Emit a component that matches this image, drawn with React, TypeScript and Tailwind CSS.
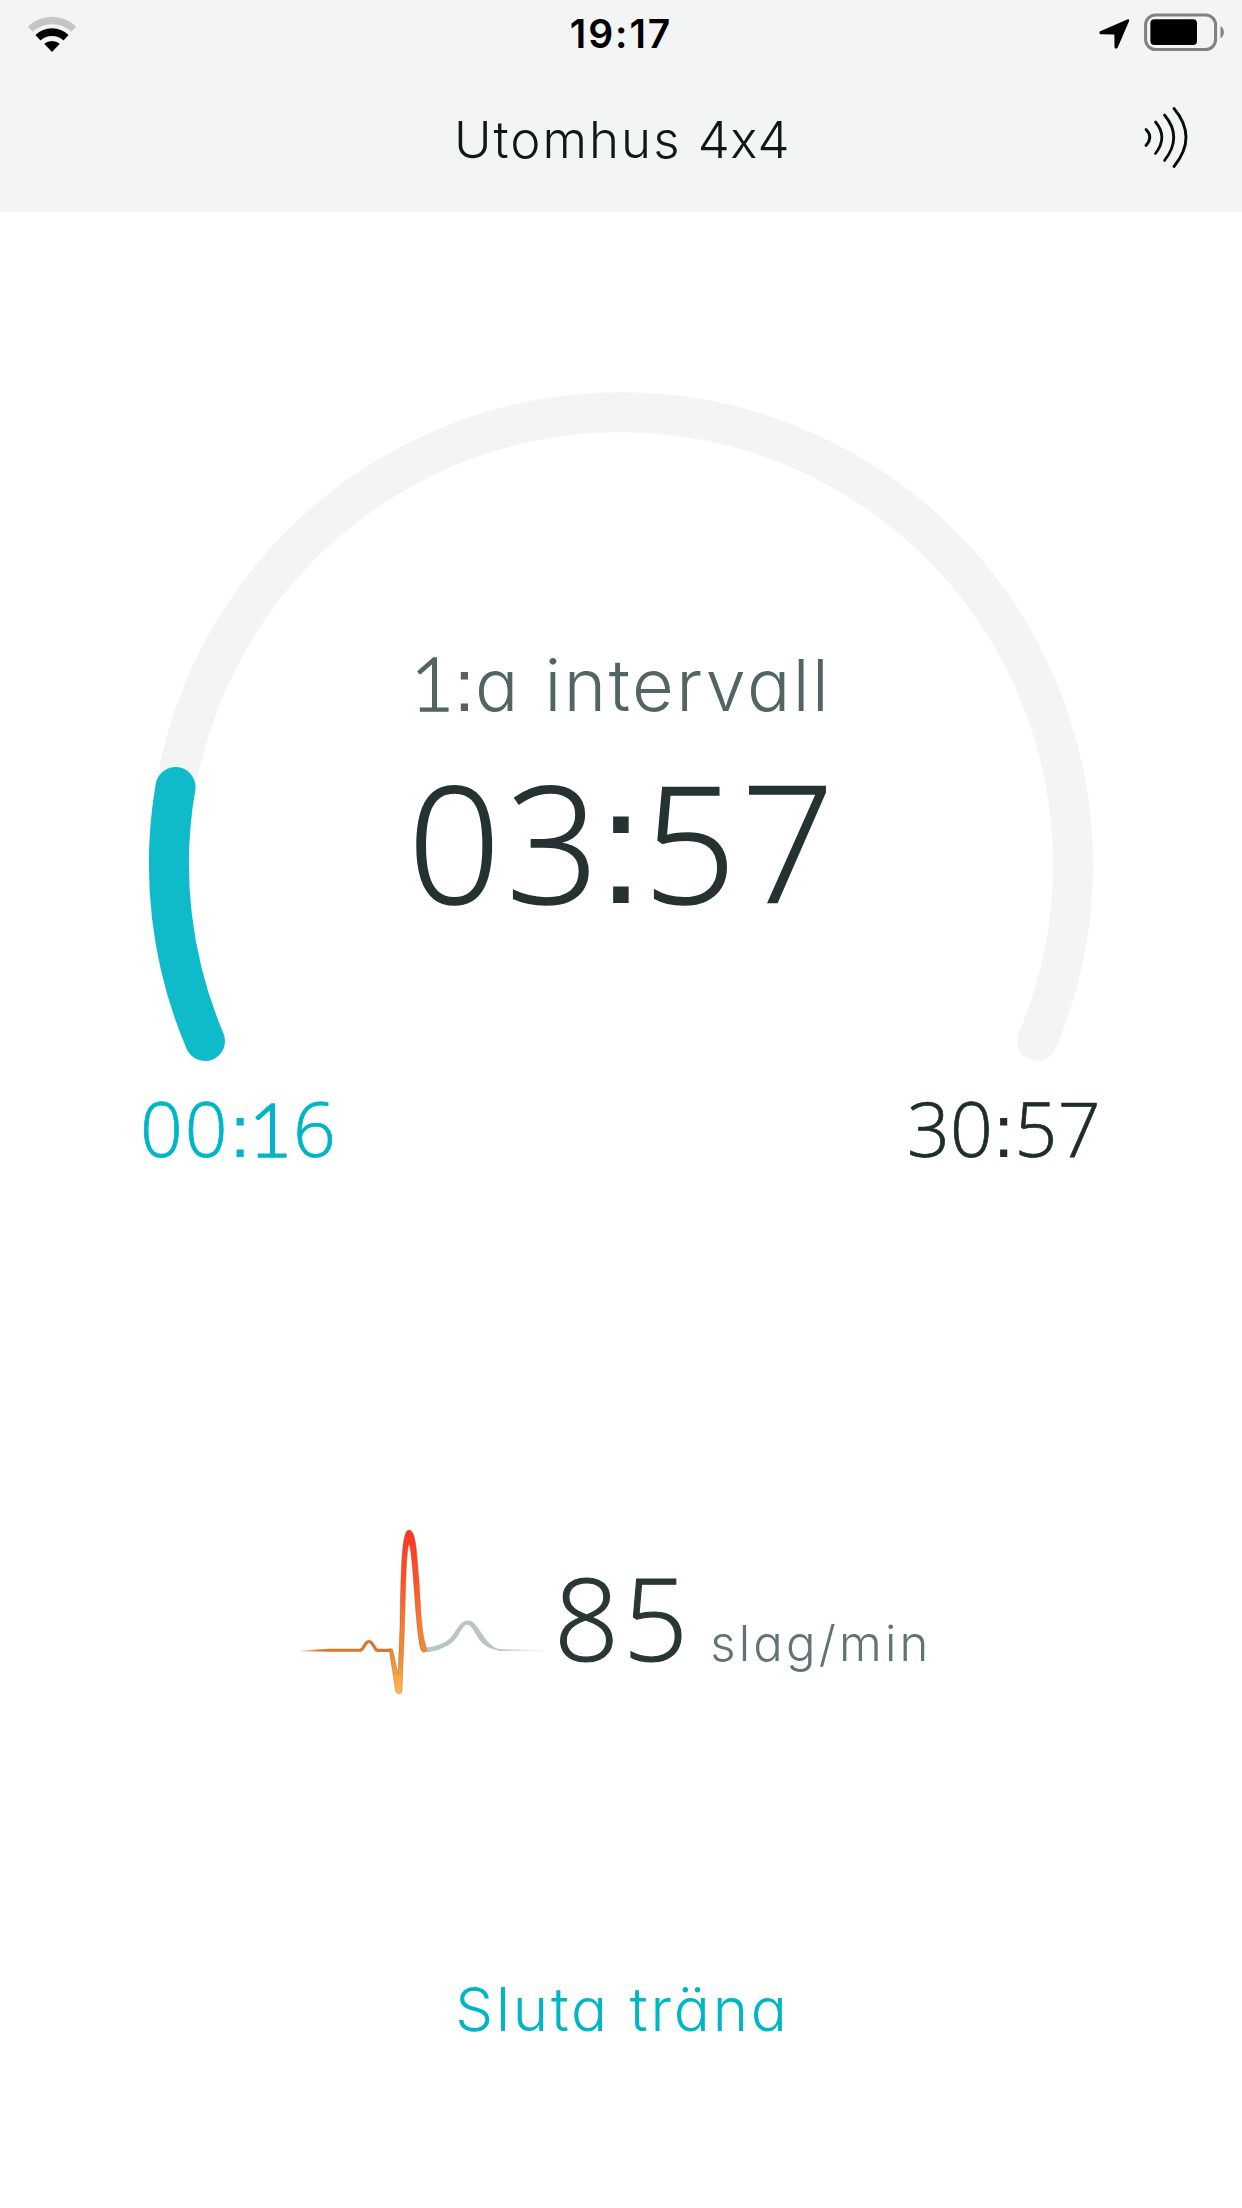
const letters = "font-['Inter',sans-serif] font-light [font-feature-settings:'cv11','calt'_0]";
const digits = "font-['Open_Sans',sans-serif] font-light [-webkit-text-stroke:0.01em_currentColor]";

function Colon({ className = '' }: { className?: string }) {
  return (
    <span className={`font-['Liberation_Sans',sans-serif] leading-[0] font-normal [-webkit-text-stroke:0px] ${className}`}>:</span>
  );
}

function One({ className = '' }: { className?: string }) {
  return (
    <span className={`font-['Lato',sans-serif] leading-[0] font-light [-webkit-text-stroke:1.4px_currentColor] ${className}`}>1</span>
  );
}

function StatusBar() {
  return (
    <div className="grid h-[68px] grid-cols-3 items-center">
      <svg width="52" height="38" viewBox="0 0 52 38" className="ml-[26px]">
        <path d="M1.8 11.5A35 35 0 0 1 50.2 11.5L45.4 16.8A29 29 0 0 0 6.6 16.8Z" fill="#c4c5c5" />
        <path d="M9.4 20A24 24 0 0 1 42.6 20L37.5 25.4A17.5 17.5 0 0 0 14.5 25.4Z" fill="#000" />
        <path d="M18.2 28.8A12 12 0 0 1 33.8 28.8L26 37Z" fill="#000" />
      </svg>
      <div className="text-center font-['Inter',sans-serif] text-[39px] leading-[68px] font-semibold tracking-[1.9px] text-black">19:17</div>
      <div className="mr-[18px] flex items-center justify-end">
        <svg width="32" height="32" viewBox="0 0 32 32" className="mr-[13px]">
          <path d="M29.3 1.4C30.7 .8 31.6 1.8 31 3.2L19.8 29.3C18.9 31.3 16.5 30.8 16.5 28.7L16.4 17.2Q16.4 16.4 15.6 16.4L3.3 16.2C1.2 16.2 .7 13.7 2.7 12.9Z" fill="#000" />
        </svg>
        <svg width="81" height="38" viewBox="0 0 81 38" className="-mt-[4px]">
          <rect x="2.6" y="1.9" width="70" height="34.6" rx="10" fill="none" stroke="#808282" strokeWidth="3" />
          <rect x="7.4" y="6.2" width="46.6" height="25.8" rx="4" fill="#000" />
          <path d="M77.500 13.200Q80.800 15 80.800 19.200T77.500 25.200Z" fill="#808282" />
        </svg>
      </div>
    </div>
  );
}

function Header() {
  return (
    <header className="h-[212px] bg-[#f3f5f4]">
      <StatusBar />
      <div className="grid h-[144px] grid-cols-[1fr_auto_1fr]">
        <div />
        <h1 className={`${letters} ml-[2px] text-[51px] leading-[144px] tracking-[2px] text-[#0e1818]`}>
          Utomhus <span className="tracking-[0.3px]">4x4</span>
        </h1>
        <svg width="46" height="62" viewBox="0 0 46 62" fill="none" stroke="#050d0d" strokeWidth="2.8" strokeLinecap="round" className="mt-[38px] mr-[53px] justify-self-end">
          <path d="M3 23.500Q10.600 31 3 39.500" />
          <path d="M12.500 16Q25.200 31 12.500 47.500" />
          <path d="M21.500 9Q40 31 21.500 54.500" />
          <path d="M31 2.500Q55 31 31 60.500" />
        </svg>
      </div>
    </header>
  );
}

function Gauge() {
  return (
    <section className="mx-auto mt-[178px] grid w-[948px]">
      <svg width="948" height="676" viewBox="147 390 948 676" fill="none" strokeWidth="40" strokeLinecap="round" className="col-start-1 row-start-1">
        <path d="M205 1041A452 452 0 1 1 1037 1041" stroke="#f3f5f4" />
        <path d="M205 1041A452 452 0 0 1 175.500 787" stroke="#0fbbcb" />
      </svg>
      <div className="col-start-1 row-start-1 flex flex-col items-center pt-[250px] whitespace-nowrap">
        <div className={`${letters} text-[72px] leading-[90px] tracking-[2.5px] text-[#536464] [word-spacing:1px]`}>
          <One className="text-[75px] tracking-[0px]" />
          <Colon className="text-[75px] tracking-[0px]" />a intervall
        </div>
        <div className={`${digits} mt-[10px] text-[163px] leading-[200px] text-[#263232]`}>
          <span className="tracking-[5.5px]">0</span>
          <span className="tracking-[-1px]">3</span>
          <Colon className="tracking-[-0.5px]" />
          <span className="tracking-[5px]">5</span>7
        </div>
      </div>
    </section>
  );
}

function Times() {
  return (
    <div className={`${digits} mt-[17px] flex justify-between pr-[141px] pl-[140px] text-[75px] leading-[90px]`}>
      <div className="tracking-[2px] text-[#00b5c6]">
        00<Colon /><One className="-ml-[4px] tracking-[1px]" />6
      </div>
      <div className="tracking-[0.4px] text-[#1f2c2c]">30<Colon />57</div>
    </div>
  );
}

function Pulse() {
  return (
    <svg width="280" height="200" viewBox="0 0 280 200" fill="none">
      <defs>
        <linearGradient id="spike" gradientUnits="userSpaceOnUse" x1="0" y1="20" x2="0" y2="184">
          <stop offset="0" stopColor="#fd3424" />
          <stop offset=".3" stopColor="#fd5124" />
          <stop offset=".6" stopColor="#fa7d30" />
          <stop offset=".78" stopColor="#ee8c33" />
          <stop offset="1" stopColor="#fdbd45" />
        </linearGradient>
        <linearGradient id="lead" gradientUnits="userSpaceOnUse" x1="20" y1="0" x2="80" y2="0">
          <stop offset="0" stopColor="#d9772b" stopOpacity=".3" />
          <stop offset=".3" stopColor="#d9772b" />
        </linearGradient>
        <linearGradient id="tail" gradientUnits="userSpaceOnUse" x1="215" y1="0" x2="268" y2="0">
          <stop offset="0" stopColor="#b9c4c6" />
          <stop offset="1" stopColor="#b9c4c6" stopOpacity="0" />
        </linearGradient>
      </defs>
      <path d="M146 138Q160 137 170 129C177 121 180 111 188 111C199 111 203 136 220 140Q203 139 195 122C191 115 187 112 184 116C178 123 176 131 168 135Q158 141 146 142Z" fill="#b9c4c6" stroke="#b9c4c6" strokeWidth=".9" />
      <path d="M218 139L268 140.200V141.200L218 141Z" fill="url(#tail)" />
      <path d="M21 140.500L50 138.800L81 138.800L81 141.800L50 141.800L21 141.300Z" fill="url(#lead)" />
      <path d="M80 140.300Q82 140 83 138C86 133 87 131.500 89 131.500S92 133 95 138Q96 140.300 98 140.300H111" stroke="#d47a30" strokeWidth="3.200" />
      <path d="M109 138.800H112.300L114 145L118 164L120 116C121 60 121.500 20 128.800 20C136 20 136.500 40 139 70C141 100 141 122 146.500 138C147.500 142 143.500 144 141 140C135 118 133.500 45 129 34C125 46 126 100 123.200 150L122 181C121.500 184.500 116.500 184.500 115.700 181L109.500 142Z" fill="url(#spike)" stroke="#8b5a4a" strokeOpacity=".45" strokeWidth=".8" />
    </svg>
  );
}

function HeartRate() {
  return (
    <section className="mt-[337px] flex h-[200px] pl-[280px] whitespace-nowrap">
      <Pulse />
      <div className="-ml-[6px] flex items-baseline pt-[32px]">
        <span className={`${digits} text-[114px] leading-[150px] tracking-[4px] text-[#293636]`}>85</span>
        <span className={`${letters} ml-[18px] text-[49px] leading-[60px] tracking-[3.2px] text-[#627373]`}>slag/min</span>
      </div>
    </section>
  );
}

export default function App() {
  return (
    <div className="flex min-h-[2208px] w-[1242px] flex-col bg-white">
      <Header />
      <main className="flex flex-col">
        <Gauge />
        <Times />
        <HeartRate />
        <button className={`${letters} mt-[254px] pl-[3px] text-[60px] leading-[90px] tracking-[2.8px] text-[#00b5c6]`}>Sluta träna</button>
      </main>
    </div>
  );
}
